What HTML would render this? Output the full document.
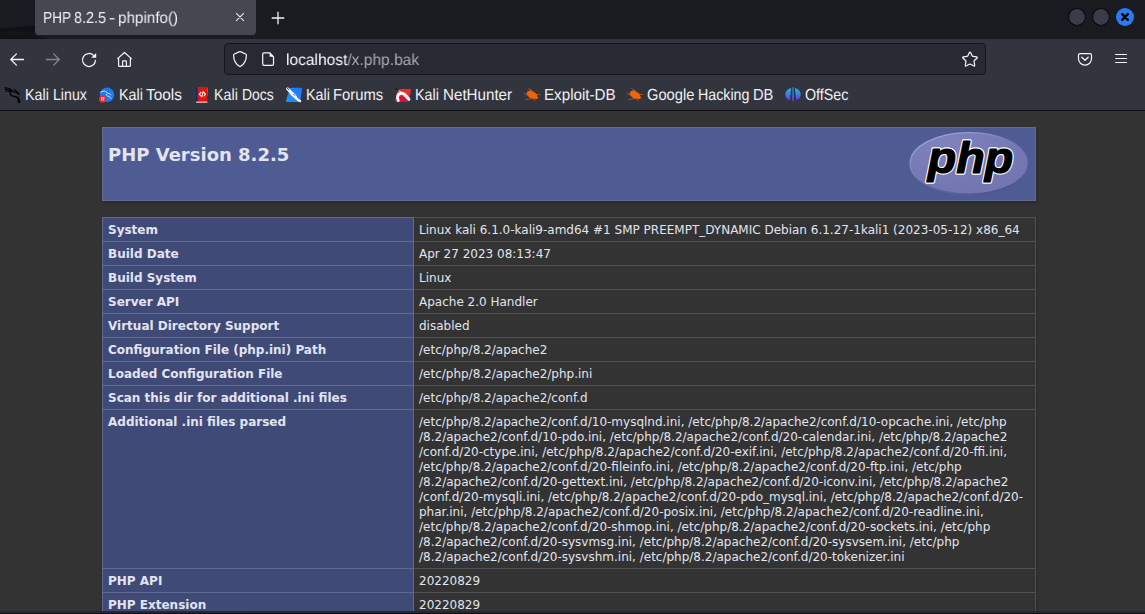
<!DOCTYPE html>
<html lang="en">
<head>
<meta charset="utf-8">
<title>PHP 8.2.5 - phpinfo()</title>
<style>
html,body{margin:0;padding:0;}
html{background:#333;}
body{width:1145px;height:614px;overflow:hidden;background:#333;position:relative;font-family:"Liberation Sans",sans-serif;}
#chrome{position:absolute;left:0;top:0;width:1145px;height:111px;background:#33353e;}
#tabbar{position:absolute;left:0;top:0;width:1145px;height:39px;background:#1a1b20;overflow:hidden;}
#tab{position:absolute;left:35px;top:-6px;width:221px;height:41px;background:#464851;border-radius:4px;}
.tx{position:absolute;white-space:nowrap;transform-origin:0 15px;line-height:20px;text-rendering:geometricPrecision;}
.tt{top:9px;font-size:16px;color:#f0f0f2;will-change:transform;}
.abs{position:absolute;}
#navbar{position:absolute;left:0;top:38px;width:1145px;height:40px;}
#urlbar{position:absolute;left:224px;top:43px;width:760px;height:30px;background:#282a33;border:1px solid #15161a;border-radius:4px;}
#url{left:286px;top:51px;font-size:16px;color:#fbfbfe;will-change:transform;}
#url span{color:#a9a9b2;}
#bm{position:absolute;left:0;top:78px;width:1145px;height:32px;}
.bk{top:86px;font-size:16px;color:#f0f0f2;}
#sep{position:absolute;left:0;top:110px;width:1145px;height:1px;background:#0b0b0e;}
#bottom{position:absolute;left:0;top:611px;width:1145px;height:3px;background:linear-gradient(#252733 0,#252733 1.6px,#111216 2.1px,#0e0f13 3px);}

#page{position:absolute;left:0;top:111px;width:1138px;height:500px;overflow:hidden;background:#333;color:#E2E4EF;font-family:"DejaVu Sans",sans-serif;font-size:16px;}
#page table{border-collapse:collapse;border:0;width:934px;box-shadow:1px 2px 3px rgba(0,0,0,0.2);margin:16px auto;text-align:left;}
#page td{border:1px solid #505153;font-size:12px;line-height:15px;vertical-align:baseline;padding:5px 5px 3px;}
#page td.h{padding:4px 5px;}
#page td.e{background:#404A77;width:300px;font-weight:bold;border-color:#606A90;}
#page td.h{background:#4F5B93;font-weight:bold;border-color:#606A90;}
#page td.v{background:#333;max-width:300px;word-wrap:break-word;}
#page h1{font-size:18px;line-height:22px;margin:12px 0;}
#logo{float:right;}
#page td.nw{white-space:nowrap;}
</style>
</head>
<body>
<div id="chrome">
  <div id="tabbar">
    <svg class="abs" style="left:0;top:0" width="60" height="39" viewBox="0 0 60 39"><path d="M0 28.8L35 25.2V32L0 32.6Z" fill="#101115"/><path d="M0 34.2L35 35.4L47 39H0Z" fill="#111216"/><path d="M0 32.6L35 32L35 35.4L0 34.2Z" fill="#15161a"/></svg>
    <div id="tab"></div>
    <div class="tx tt" style="left:43.2px;transform:scaleX(0.855)">PHP</div>
    <div class="tx tt" style="left:73.63px;transform:scaleX(0.8993)">8.2.5</div>
    <div class="tx tt" style="left:109.42px;transform:scaleX(1.1733)">-</div>
    <div class="tx tt" style="left:117.85px;transform:scaleX(0.9518)">phpinfo()</div>
    <svg class="abs" style="left:232px;top:9px" width="16" height="16" viewBox="0 0 16 16"><path d="M4.4 4.4L11.6 11.6M11.6 4.4L4.4 11.6" stroke="#e8e8ec" stroke-width="1.1" fill="none" stroke-linecap="round"/></svg>
    <svg class="abs" style="left:269.7px;top:9.8px" width="16" height="16" viewBox="0 0 16 16"><path d="M8 2.2V13.8M2.2 8H13.8" stroke="#f4f4f6" stroke-width="1.3" fill="none" stroke-linecap="round"/></svg>
    <svg class="abs" style="left:1064px;top:4px" width="76" height="26" viewBox="0 0 76 26">
      <circle cx="13" cy="13" r="8.9" fill="#08090b"/><circle cx="13" cy="13" r="7.9" fill="#3a3c4a"/>
      <circle cx="37" cy="13" r="8.9" fill="#08090b"/><circle cx="37" cy="13" r="7.9" fill="#3a3c4a"/>
      <circle cx="61" cy="13" r="9" fill="#2a7bf0"/>
      <path d="M58.2 10.2L63.8 15.8M63.8 10.2L58.2 15.8" stroke="#030408" stroke-width="2.5" stroke-linecap="round"/>
    </svg>
  </div>
  <!-- nav icons -->
  <svg class="abs" style="left:9px;top:51px" width="16" height="17" viewBox="0 0 16 17"><path d="M14.5 8.5H1.8M7.4 2.9L1.8 8.5L7.4 14.1" stroke="#f4f4f6" stroke-width="1.3" fill="none" stroke-linecap="round" stroke-linejoin="round"/></svg>
  <svg class="abs" style="left:45px;top:51px" width="16" height="17" viewBox="0 0 16 17"><path d="M1.4 8.5H14.3M8.7 2.9L14.3 8.5L8.7 14.1" stroke="#84858d" stroke-width="1.3" fill="none" stroke-linecap="round" stroke-linejoin="round"/></svg>
  <svg class="abs" style="left:81px;top:52px" width="16" height="16" viewBox="0 0 16 16"><path d="M12.6 3.4A6.5 6.5 0 1 0 14.5 8.4" stroke="#f4f4f6" stroke-width="1.25" fill="none" stroke-linecap="round"/><path d="M15.2 1V5.8H10.2Z" fill="#f4f4f6"/></svg>
  <svg class="abs" style="left:116px;top:51px" width="17" height="17" viewBox="0 0 17 17"><path d="M1.6 7.6L8.5 1.5L15.4 7.6M2.6 7V14.4Q2.6 15.3 3.5 15.3H13.5Q14.4 15.3 14.4 14.4V7M6.6 15.3V10.6Q6.6 9.8 7.4 9.8H9.6Q10.4 9.8 10.4 10.6V15.3" stroke="#f4f4f6" stroke-width="1.2" fill="none" stroke-linecap="round" stroke-linejoin="round"/></svg>
  <div id="urlbar"></div>
  <svg class="abs" style="left:232px;top:50px" width="16" height="18" viewBox="0 0 16 18"><path d="M8 1.6Q8.4 1.6 9 1.9L13.6 4Q14.4 4.4 14.4 5.2C14.4 10.4 12 14.2 8.6 16.3Q8 16.7 7.4 16.3C4 14.2 1.6 10.4 1.6 5.2Q1.6 4.4 2.4 4L7 1.9Q7.6 1.6 8 1.6Z" stroke="#f4f4f6" stroke-width="1.25" fill="none" stroke-linejoin="round"/></svg>
  <svg class="abs" style="left:261px;top:51px" width="14" height="16" viewBox="0 0 14 16"><path d="M3 1.8H8.6L12.5 5.7V13.1Q12.5 14.4 11.2 14.4H3Q1.7 14.4 1.7 13.1V3.1Q1.7 1.8 3 1.8Z" stroke="#f4f4f6" stroke-width="1.25" fill="none" stroke-linejoin="round"/><path d="M8.6 1.8V5.7H12.5Z" fill="#f4f4f6"/></svg>
  <div id="url" class="tx" style="left:286px;transform:scaleX(0.972)">localhost<span>/x.php.bak</span></div>
  <svg class="abs" style="left:961px;top:50px" width="18" height="18" viewBox="0 0 18 18"><path d="M8.32 2.76Q9.00 1.35 9.68 2.76L11.15 5.79Q11.44 6.39 12.11 6.48L15.43 6.94Q16.99 7.15 15.86 8.24L13.43 10.57Q12.95 11.03 13.07 11.69L13.66 15.00Q13.94 16.55 12.55 15.80L9.59 14.22Q9.00 13.90 8.41 14.22L5.45 15.80Q4.06 16.55 4.34 15.00L4.93 11.69Q5.05 11.03 4.57 10.57L2.14 8.24Q1.01 7.15 2.57 6.94L5.89 6.48Q6.56 6.39 6.85 5.79Z" stroke="#f4f4f6" stroke-width="1.25" fill="none" stroke-linejoin="round"/></svg>
  <svg class="abs" style="left:1077px;top:51px" width="16" height="16" viewBox="0 0 16 16"><path d="M3 2.7H13Q14.5 2.7 14.5 4.2V7.7A6.5 6.5 0 0 1 1.5 7.7V4.2Q1.5 2.7 3 2.7Z" stroke="#f4f4f6" stroke-width="1.2" fill="none"/><path d="M4.8 6.2L8 9.3L11.2 6.2" stroke="#f4f4f6" stroke-width="1.3" fill="none" stroke-linecap="round" stroke-linejoin="round"/></svg>
  <svg class="abs" style="left:1113px;top:51px" width="16" height="16" viewBox="0 0 16 16"><path d="M2.6 3.5H13.5M2.6 7.5H13.5M2.6 11.5H13.5" stroke="#f4f4f6" stroke-width="1.2" fill="none" stroke-linecap="round"/></svg>
  <!-- bookmark icons -->
  <svg class="abs" style="left:4px;top:86px" width="18" height="18" viewBox="0 0 18 18"><path d="M1 1.8C3.5 1.6 6 2.4 7.6 4.2M1.2 3.4C3.4 3.2 5.4 3.6 7 4.8M1.6 5.2C3.2 4.8 5 5 6.6 5.6M10.4 3.4C12 4.6 13.8 6.2 14.8 7.8" stroke="#000" stroke-width="1.1" fill="none" stroke-linecap="round"/><path d="M7.2 4.4C9.6 5.6 12.6 5.8 15 8.4M7.6 4.6C5.8 6.4 5.6 8.8 8 9.8C10.6 10.8 13.6 10.6 14.8 12.6C15.4 13.8 15.6 15.2 15.6 16.4M13.6 11.8C14.4 13.2 14.6 14.6 14.4 16" stroke="#000" stroke-width="1.4" fill="none" stroke-linecap="round"/></svg>
  <svg class="abs" style="left:98px;top:87px" width="17" height="17" viewBox="0 0 17 17"><circle cx="9.05" cy="7.8" r="7.2" fill="#1b78f6"/><path d="M2.6 5.2C4.6 3.9 6.6 3.8 7.8 4.6C8.8 5.2 9.2 6.2 10.2 6.4C11.4 6.5 12.4 6.9 13 7.8M8.4 7.2C8.2 8.4 8.8 9 10 9.2C11.4 9.5 12.6 10.2 13.2 11.6" stroke="#cfe2ff" stroke-width="1" fill="none" stroke-linecap="round"/><circle cx="4.6" cy="12.1" r="3.6" fill="#f0242c"/><path d="M3.1 10.7H4.5M3.8 10.7V13.7M5 10.7H6.4M5.7 10.7V13.7" stroke="#fff" stroke-width="0.9"/></svg>
  <svg class="abs" style="left:195px;top:86px" width="15" height="18" viewBox="0 0 15 18"><rect x="11.6" y="2.4" width="1.4" height="2.6" fill="#f26a12"/><rect x="11.6" y="5" width="1.4" height="2.6" fill="#2c8a4a"/><rect x="11.6" y="7.6" width="1.4" height="2.6" fill="#3355c8"/><rect x="1" y="1" width="11.4" height="15.4" rx="0.6" fill="#e01512"/><rect x="1" y="1" width="1.7" height="15" fill="#0d2a75"/><rect x="1" y="15.6" width="11.4" height="1.1" fill="#ead9d9"/><path d="M5.9 6.4L4.3 8.2L5.9 10M8.9 6.4L10.5 8.2L8.9 10M8.1 5.6L6.7 10.8" stroke="#fff" stroke-width="1.1" fill="none" stroke-linecap="round"/></svg>
  <svg class="abs" style="left:284px;top:86px" width="20" height="19" viewBox="0 0 20 19"><defs><linearGradient id="kf" x1="1" y1="0" x2="0" y2="1"><stop offset="0" stop-color="#1f74fb"/><stop offset="1" stop-color="#1b95ff"/></linearGradient></defs><path d="M7 1.8H17.2Q18.3 1.8 18.1 2.9L16.3 14.9Q16.1 15.9 15.1 15.9H2.8Q1.7 15.9 2 14.8L5.6 2.8Q6 1.8 7 1.8Z" fill="url(#kf)"/><path d="M2 0.9L4.4 1.6L8.2 5.4L11.6 8.6L13.6 12L17.3 14.6L16.6 16.6L14 15.6L10.6 12.6L7.2 9.6L4.8 6.2L2.2 3.6Z" fill="#f4f1ec"/><path d="M2.6 1.4L4.6 3.6M9.8 8.4L10.6 9.2" stroke="#1c1d22" stroke-width="0.9" fill="none" stroke-linecap="round"/></svg>
  <svg class="abs" style="left:394px;top:87px" width="18" height="18" viewBox="0 0 18 18"><path d="M6 1.9H16.4Q17.2 1.9 17 2.8L15 13.6Q14.8 14.4 14 14.4H2Q1.2 14.4 1.4 13.4L3 5Z" fill="#f22a2e"/><path d="M2.2 14.4L1.4 12.6L3 9L6 14.4Z M8 8.4L13.4 13.2L11 14.4H6.6L5.4 10.4Z" fill="#d8123f"/><path d="M4.2 13.6C2.6 10.6 3.6 6.6 7.2 6.2C9.8 6 11.6 8.2 15 12.4" stroke="#fafafa" stroke-width="2.9" fill="none" stroke-linecap="round"/><path d="M1.3 1.2L4.6 3.8" stroke="#15161a" stroke-width="0.9" stroke-linecap="round"/><path d="M4.6 3.8L7.4 5.2" stroke="#e8e8e8" stroke-width="0.9" stroke-linecap="round"/></svg>
  <svg class="abs" style="left:523px;top:87px" width="18" height="16" viewBox="0 0 18 16"><ellipse cx="9" cy="7.8" rx="5.7" ry="3.5" transform="rotate(27 9 7.8)" fill="#f2640c"/><circle cx="13.4" cy="10.4" r="1.5" fill="#f2640c"/><path d="M5.7 1.7L8.4 4.4M7.5 2.1L9.8 4.9M12.5 7.5L16.8 7.6M2.9 12.6L7.9 11.6M10.7 12.2L12 13.7M1.1 6.2L3.8 8" stroke="#e0600f" stroke-width="0.8" fill="none" stroke-linecap="round" opacity="0.85"/></svg>
  <svg class="abs" style="left:625.8px;top:87px" width="18" height="16" viewBox="0 0 18 16"><ellipse cx="9" cy="7.8" rx="5.7" ry="3.5" transform="rotate(27 9 7.8)" fill="#f2640c"/><circle cx="13.4" cy="10.4" r="1.5" fill="#f2640c"/><path d="M5.7 1.7L8.4 4.4M7.5 2.1L9.8 4.9M12.5 7.5L16.8 7.6M2.9 12.6L7.9 11.6M10.7 12.2L12 13.7M1.1 6.2L3.8 8" stroke="#e0600f" stroke-width="0.8" fill="none" stroke-linecap="round" opacity="0.85"/></svg>
  <svg class="abs" style="left:785px;top:87px" width="16" height="16" viewBox="0 0 16 16"><defs><linearGradient id="og" x1="0" y1="0" x2="0" y2="1"><stop offset="0" stop-color="#1bb8d6"/><stop offset="0.5" stop-color="#3a82e2"/><stop offset="1" stop-color="#6a2cf0"/></linearGradient><linearGradient id="og2" x1="0" y1="0" x2="0" y2="1"><stop offset="0" stop-color="#228aa8"/><stop offset="0.6" stop-color="#3d62c8"/><stop offset="1" stop-color="#6a20f0"/></linearGradient></defs><path d="M6 0.9C2.4 1.8 0.3 4.6 0.3 7.6C0.3 10.2 1.9 12.4 4.4 13.4C5.4 10 5.9 5 6 0.9Z" fill="url(#og)"/><path d="M10 0.9C13.6 1.8 15.7 4.6 15.7 7.6C15.7 10.2 14.1 12.4 11.6 13.4C10.6 10 10.1 5 10 0.9Z" fill="url(#og)"/><path d="M7.3 0.3H8.7L9 12.6L8 15.6L7 12.6Z" fill="url(#og2)"/></svg>
  <div class="tx bk" style="left:24.60px;transform:scaleX(0.8920)">Kali</div>
  <div class="tx bk" style="left:52.86px;transform:scaleX(0.8841)">Linux</div>
  <div class="tx bk" style="left:118.62px;transform:scaleX(0.8920)">Kali</div>
  <div class="tx bk" style="left:145.85px;transform:scaleX(0.9613)">Tools</div>
  <div class="tx bk" style="left:213.74px;transform:scaleX(0.8920)">Kali</div>
  <div class="tx bk" style="left:241.78px;transform:scaleX(0.8706)">Docs</div>
  <div class="tx bk" style="left:305.73px;transform:scaleX(0.8920)">Kali</div>
  <div class="tx bk" style="left:333.34px;transform:scaleX(0.9234)">Forums</div>
  <div class="tx bk" style="left:414.50px;transform:scaleX(0.8920)">Kali</div>
  <div class="tx bk" style="left:442.91px;transform:scaleX(0.9475)">NetHunter</div>
  <div class="tx bk" style="left:543.91px;transform:scaleX(0.9483)">Exploit-DB</div>
  <div class="tx bk" style="left:647.11px;transform:scaleX(0.9174)">Google</div>
  <div class="tx bk" style="left:697.76px;transform:scaleX(0.8897)">Hacking</div>
  <div class="tx bk" style="left:753.22px;transform:scaleX(0.9168)">DB</div>
  <div class="tx bk" style="left:804.81px;transform:scaleX(0.8928)">OffSec</div>
  <div id="sep"></div>
</div>
<div id="page">
<div class="center">
<table>
<tr class="h"><td class="h">
<svg id="logo" width="120" height="64" viewBox="0 0 120 64" style="overflow:visible"><defs><radialGradient id="pg" cx="0.3" cy="0.15" r="0.95"><stop offset="0" stop-color="#8082bc"/><stop offset="0.45" stop-color="#787bb5"/><stop offset="1" stop-color="#7174af"/></radialGradient><linearGradient id="pr" x1="0.15" y1="0" x2="0.85" y2="1"><stop offset="0" stop-color="#a9acda"/><stop offset="0.4" stop-color="#7c7eb8"/><stop offset="1" stop-color="#4c478a"/></linearGradient></defs><ellipse cx="59.1" cy="31.4" rx="59" ry="30.8" fill="url(#pg)" stroke="url(#pr)" stroke-width="1.3"/><g transform="translate(60.6 41) scale(1.062 1)" font-family="'Liberation Sans', sans-serif" font-style="italic" font-weight="bold" font-size="44" text-anchor="middle"><text x="0" y="0" fill="#fff" stroke="#fff" stroke-width="3.4" stroke-linejoin="round">php</text><text x="0" y="0" fill="#000" stroke="#000" stroke-width="1.2" stroke-linejoin="round">php</text></g></svg>
<h1 class="p">PHP Version 8.2.5</h1>
</td></tr>
</table>
<table>
<tr><td class="e">System </td><td class="v">Linux kali 6.1.0-kali9-amd64 #1 SMP PREEMPT_DYNAMIC Debian 6.1.27-1kali1 (2023-05-12) x86_64 </td></tr>
<tr><td class="e">Build Date </td><td class="v">Apr 27 2023 08:13:47 </td></tr>
<tr><td class="e">Build System </td><td class="v">Linux </td></tr>
<tr><td class="e">Server API </td><td class="v">Apache 2.0 Handler </td></tr>
<tr><td class="e">Virtual Directory Support </td><td class="v">disabled </td></tr>
<tr><td class="e">Configuration File (php.ini) Path </td><td class="v">/etc/php/8.2/apache2 </td></tr>
<tr><td class="e">Loaded Configuration File </td><td class="v">/etc/php/8.2/apache2/php.ini </td></tr>
<tr><td class="e">Scan this dir for additional .ini files </td><td class="v">/etc/php/8.2/apache2/conf.d </td></tr>
<tr><td class="e">Additional .ini files parsed </td><td class="v nw">/etc/php/8.2/apache2/conf.d/10-mysqlnd.ini, /etc/php/8.2/apache2/conf.d/10-opcache.ini, /etc/php<br>/8.2/apache2/conf.d/10-pdo.ini, /etc/php/8.2/apache2/conf.d/20-calendar.ini, /etc/php/8.2/apache2<br>/conf.d/20-ctype.ini, /etc/php/8.2/apache2/conf.d/20-exif.ini, /etc/php/8.2/apache2/conf.d/20-ffi.ini,<br>/etc/php/8.2/apache2/conf.d/20-fileinfo.ini, /etc/php/8.2/apache2/conf.d/20-ftp.ini, /etc/php<br>/8.2/apache2/conf.d/20-gettext.ini, /etc/php/8.2/apache2/conf.d/20-iconv.ini, /etc/php/8.2/apache2<br>/conf.d/20-mysqli.ini, /etc/php/8.2/apache2/conf.d/20-pdo_mysql.ini, /etc/php/8.2/apache2/conf.d/20-<br>phar.ini, /etc/php/8.2/apache2/conf.d/20-posix.ini, /etc/php/8.2/apache2/conf.d/20-readline.ini,<br>/etc/php/8.2/apache2/conf.d/20-shmop.ini, /etc/php/8.2/apache2/conf.d/20-sockets.ini, /etc/php<br>/8.2/apache2/conf.d/20-sysvmsg.ini, /etc/php/8.2/apache2/conf.d/20-sysvsem.ini, /etc/php<br>/8.2/apache2/conf.d/20-sysvshm.ini, /etc/php/8.2/apache2/conf.d/20-tokenizer.ini</td></tr>
<tr><td class="e">PHP API </td><td class="v">20220829 </td></tr>
<tr><td class="e">PHP Extension </td><td class="v">20220829 </td></tr>
<tr><td class="e">Zend Extension </td><td class="v">420220829 </td></tr>
<tr><td class="e">Zend Extension Build </td><td class="v">API420220829,NTS </td></tr>
<tr><td class="e">PHP Extension Build </td><td class="v">API20220829,NTS </td></tr>
</table>
</div>
</div>
<div id="bottom"></div>
</body>
</html>
